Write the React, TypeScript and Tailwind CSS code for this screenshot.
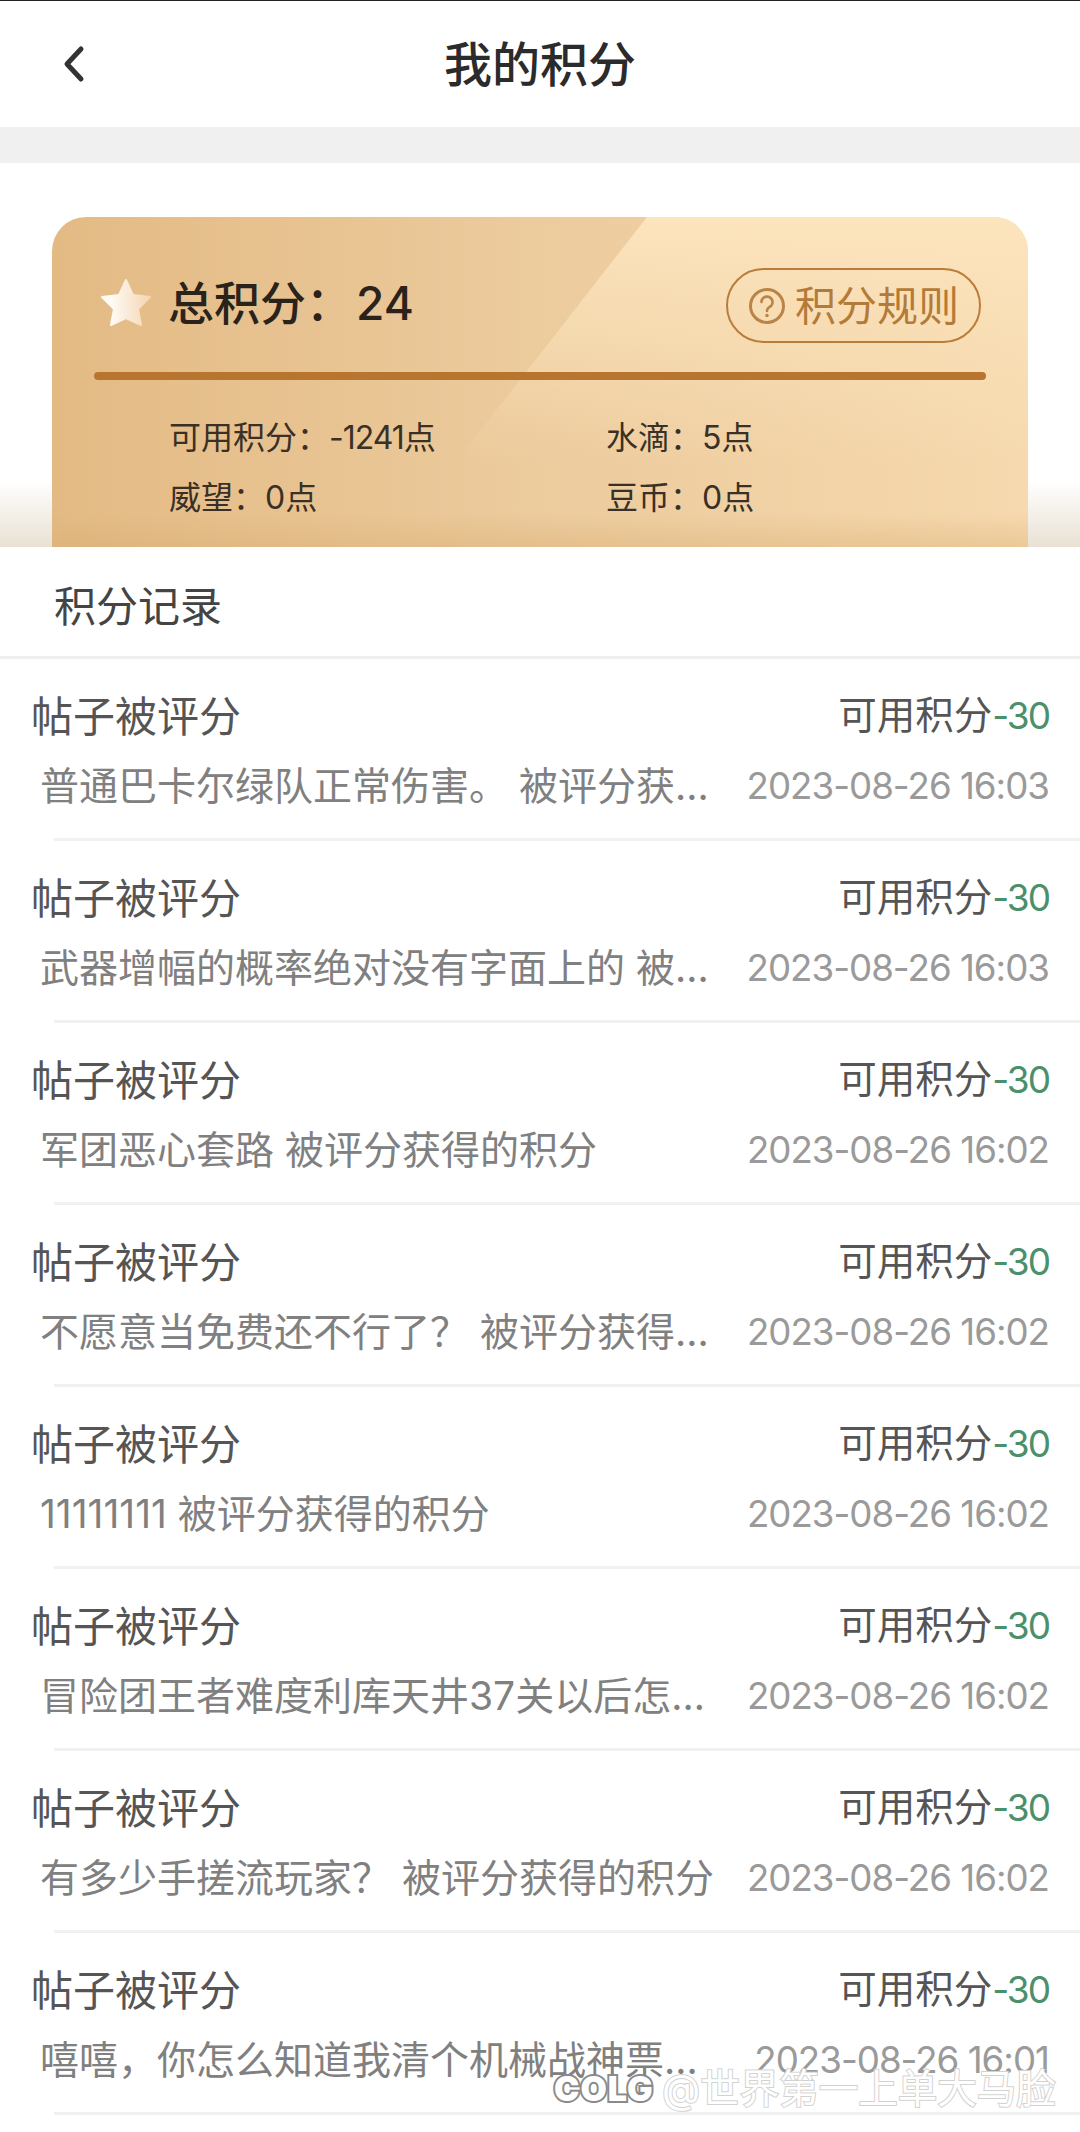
const records = [
  { text: '普通巴卡尔绿队正常伤害。 被评分获得的积分', time: '2023-08-26 16:03' },
  { text: '武器增幅的概率绝对没有字面上的 被评分获得的积分', time: '2023-08-26 16:03' },
  { text: '军团恶心套路 被评分获得的积分', time: '2023-08-26 16:02' },
  { text: '不愿意当免费还不行了？ 被评分获得的积分', time: '2023-08-26 16:02' },
  { text: '11111111 被评分获得的积分', time: '2023-08-26 16:02' },
  { text: '冒险团王者难度利库天井37关以后怎么打 被评分获得的积分', time: '2023-08-26 16:02' },
  { text: '有多少手搓流玩家？ 被评分获得的积分', time: '2023-08-26 16:02' },
  { text: '嘻嘻，你怎么知道我清个机械战神票都 被评分获得的积分', time: '2023-08-26 16:01' },
];

function Star() {
  return (
    <svg width="52" height="50" viewBox="0 0 52 50" className="shrink-0">
      <defs>
        <linearGradient id="star" x1="0" y1="0" x2="1" y2="0">
          <stop offset="0.2" stopColor="#fffaf3" />
          <stop offset="1" stopColor="#f4d6b4" />
        </linearGradient>
      </defs>
      <path
        d="M26 2 L33 17 L50 19 L38 31 L41 47 L26 40 L11 47 L14 31 L2 19 L19 17 Z"
        fill="url(#star)"
        stroke="url(#star)"
        strokeWidth="2"
        strokeLinejoin="round"
      />
    </svg>
  );
}

function RecordRow({ text, time }: { text: string; time: string }) {
  return (
    <div>
      <div className="h-[179px] pt-[30px]">
        <div className="flex h-[56px] items-center justify-between pl-[31px] pr-[31px]">
          <span className="text-[42px] leading-[56px] text-[#555555]">帖子被评分</span>
          <span className="-mt-[4px] text-[38.5px] leading-[56px] text-[#555555]">
            可用积分<span className="text-[37px] tracking-[-2px] text-[#4b8f6b]">-30</span>
          </span>
        </div>
        <div className="mt-[16px] flex h-[50px] items-center pl-[40px] pr-[31px]">
          <span className="w-[680px] truncate text-[39px] leading-[50px] text-[#808080]">{text}</span>
          <span className="ml-auto shrink-0 text-[36.7px] leading-[50px] tracking-[-1px] text-[#9a9a9a]">{time}</span>
        </div>
      </div>
      <div className="ml-[54px] h-[3px] bg-[#f0f1f1]" />
    </div>
  );
}

export default function App() {
  return (
    <div className="relative h-[2132px] w-[1080px] overflow-hidden bg-white font-['Inter','Noto_Sans_CJK_SC',sans-serif]">
      <div className="h-px bg-[#222222]" />

      {/* Header */}
      <div className="flex h-[126px] items-center justify-center">
        <svg width="30" height="40" viewBox="0 0 30 40" className="absolute left-[60px] top-[44px]">
          <path d="M21 5 L7 20 L21 35" fill="none" stroke="#333333" strokeWidth="5" strokeLinecap="round" strokeLinejoin="round" />
        </svg>
        <span className="mt-[1px] text-[48px] font-medium text-[#2b2b2b]">我的积分</span>
      </div>
      <div className="h-[36px] bg-[#f0f0f0]" />

      {/* Summary card */}
      <div className="relative h-[384px] px-[52px] pt-[54px]">
        <div className="absolute bottom-0 left-0 right-0 h-[66px] bg-gradient-to-b from-white to-[#e9e1d4]" />
        <div className="relative h-[330px] overflow-hidden rounded-t-[34px] bg-gradient-to-r from-[#e3ba84] via-[#eccb9d] to-[#f6d9ae]">
          <div className="absolute inset-0 bg-gradient-to-b from-[#fce4bd] to-transparent to-[75%] [clip-path:polygon(595px_0,421px_223px,340px_330px,100%_330px,100%_0)]" />
          <div className="absolute bottom-0 left-0 right-0 h-[34px] bg-gradient-to-b from-transparent to-[#d6a96c]/35" />
          <div className="relative">
            <div className="flex items-center justify-between pl-[48px] pr-[47px] pt-[51px]">
              <div className="-mt-[6px] flex items-center gap-[16px]">
                <Star />
                <span className="text-[46px] font-medium leading-[60px] text-[#2a231b]">总积分：</span>
                <span className="-ml-[12px] text-[46px] font-medium leading-[60px] text-[#2a231b]">24</span>
              </div>
              <div className="flex h-[75px] w-[255px] items-center gap-[11px] rounded-full border-2 border-[#b97c3a] pl-[20px]">
                <svg width="38" height="38" viewBox="0 0 38 38" className="shrink-0">
                  <circle cx="19" cy="19" r="16.5" fill="none" stroke="#b98446" strokeWidth="3" />
                  <path d="M13.5 15 A5.5 5.5 0 1 1 21.5 20 Q19 21.5 19 24" fill="none" stroke="#b98446" strokeWidth="2.6" strokeLinecap="round" />
                  <circle cx="19" cy="28.5" r="1.7" fill="#b98446" />
                </svg>
                <span className="-ml-[2px] text-[41px] leading-[50px] text-[#b47a38]">积分规则</span>
              </div>
            </div>
            <div className="mx-[42px] mt-[29px] h-[8px] rounded-full bg-[#b8752f]" />
            <div className="mt-[28px] grid grid-cols-[437px_1fr] pl-[117px] text-[32px] leading-[60px] text-[#3a3026]">
              <span>可用积分：<span className="tracking-[-1px]">-1241</span>点</span>
              <span>水滴：5点</span>
              <span>威望：0点</span>
              <span>豆币：0点</span>
            </div>
          </div>
        </div>
      </div>

      {/* Records */}
      <div className="h-[109px] pl-[54px] text-[42px] leading-[120px] text-[#444444]">积分记录</div>
      <div className="h-[3px] bg-[#eef0f0]" />
      {records.map((r) => (
        <RecordRow key={r.text} text={r.text} time={r.time} />
      ))}

      {/* Watermark */}
      <div className="absolute left-[554px] top-[2065px] flex h-[48px] items-center">
        <span className="w-[104px] text-[34px] font-black leading-[48px] tracking-[1px] text-white [-webkit-text-stroke:4px_#8a8a8a] [paint-order:stroke_fill]">COLG</span>
        <span className="ml-[4px] whitespace-nowrap text-[39.5px] leading-[48px] text-white [-webkit-text-stroke:2px_#d2d2d2] [paint-order:stroke_fill]">@世界第一上单大马脸</span>
      </div>
    </div>
  );
}
